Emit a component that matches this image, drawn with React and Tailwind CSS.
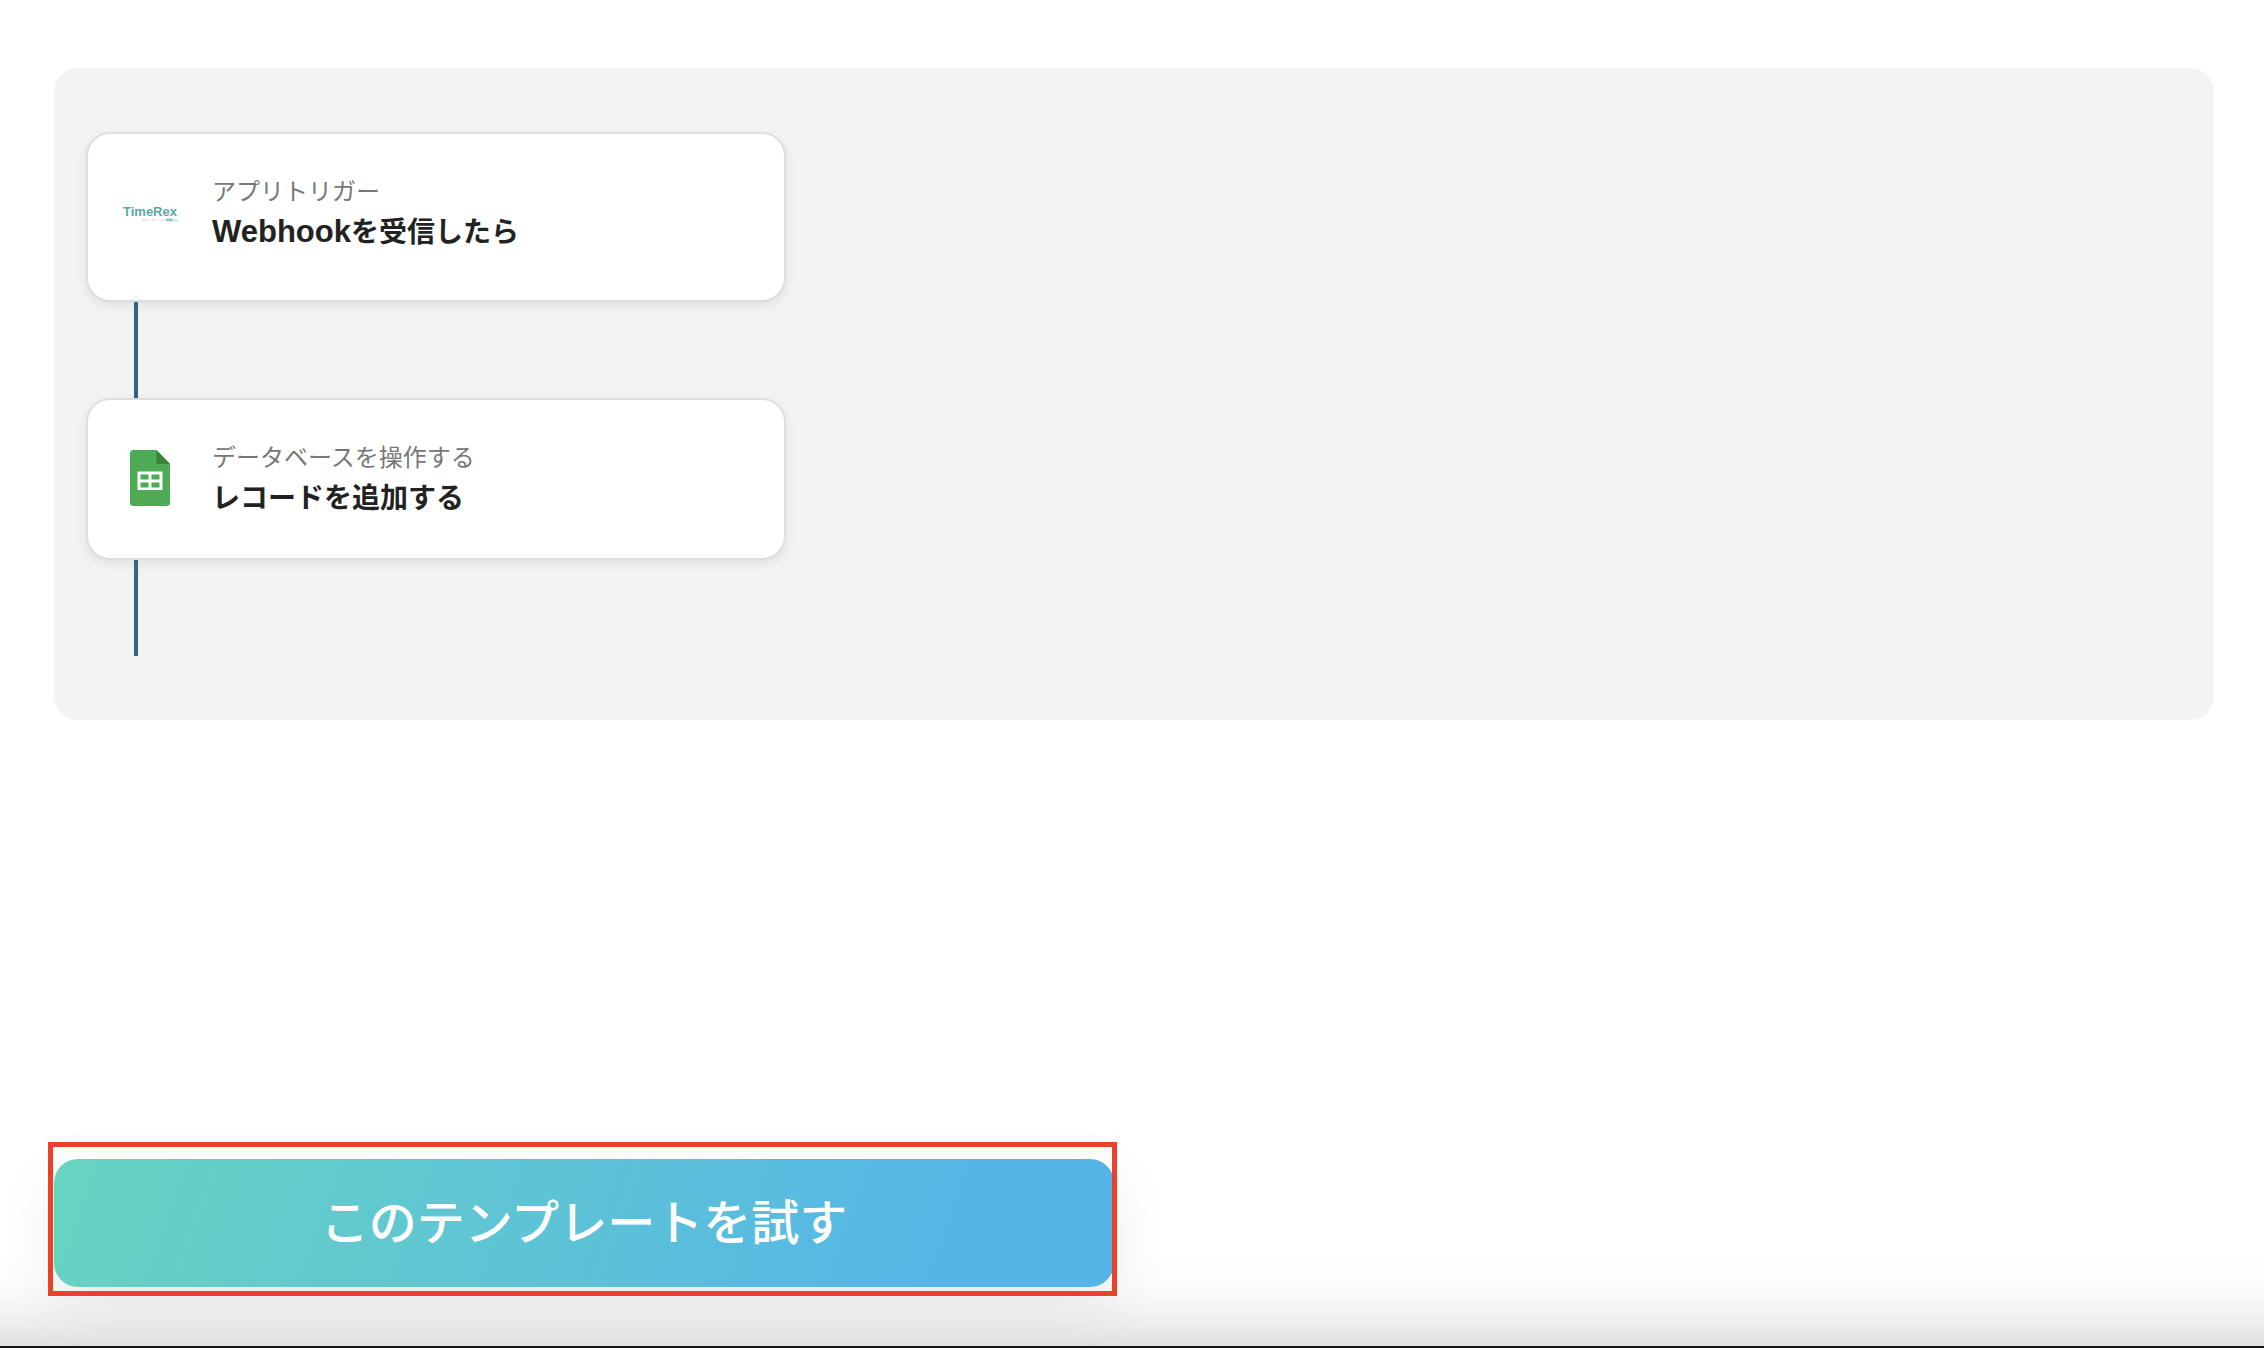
function TimeRexLogo() {
  return (
    <div className="flex h-14 w-14 flex-col items-center justify-center pt-1 font-['Liberation_Sans',sans-serif]">
      <span className="text-[13px] leading-[12px] font-bold text-[#57aaa0]">TimeRex</span>
      <span className="self-end text-[3px] leading-[4px] whitespace-nowrap text-gray-400">
        カレンダーシェア<b className="text-[#57aaa0]">調整なら</b>
      </span>
    </div>
  );
}

function SheetsLogo() {
  return (
    <svg viewBox="0 0 40 56" className="h-14 w-10" aria-hidden="true">
      <path d="M3.5 0H26.5L40 14V52.5Q40 56 36.5 56H3.5Q0 56 0 52.5V3.5Q0 0 3.5 0Z" fill="#4eab55" />
      <path d="M26.5 0L40 14H26.5Z" fill="#3a8339" />
      <path
        d="M7.5 21.5H32.5V40H7.5ZM10.5 24.5V29.5H18.5V24.5ZM21.5 24.5V29.5H29.5V24.5ZM10.5 32.5V37.5H18.5V32.5ZM21.5 32.5V37.5H29.5V32.5Z"
        fill="#fff"
        fillRule="evenodd"
      />
    </svg>
  );
}

function StepCard({ logo, label, title, className }) {
  return (
    <li>
      <article
        className={`flex w-full max-w-[700px] gap-8 rounded-3xl border-2 border-[#dedede] bg-white px-8 pt-[38px] shadow-[0_4px_12px_rgba(0,0,0,0.08)] ${className}`}
      >
        <div className="mt-3 flex h-14 w-[60px] shrink-0 items-center justify-center">{logo}</div>
        <div>
          <p className="text-[24px] leading-[36px] text-[#777]">{label}</p>
          <h2 className="text-[28px] leading-[44px] font-bold text-[#222]">{title}</h2>
        </div>
      </article>
      <div className="ml-12 h-24 w-1 bg-[#30667f]" />
    </li>
  );
}

export default function App() {
  return (
    <div className="flex min-h-screen flex-col bg-white font-['Noto_Sans_CJK_JP',sans-serif]">
      <main className="mt-[68px] mr-[50px] ml-[54px]">
        <ol className="rounded-3xl bg-[#f3f3f3] px-8 py-16">
          <StepCard
            logo={<TimeRexLogo />}
            label="アプリトリガー"
            title={
              <>
                <span className="font-['Liberation_Sans',sans-serif] text-[31px] leading-none">Webhook</span>を受信したら
              </>
            }
            className="pb-12"
          />
          <StepCard
            logo={<SheetsLogo />}
            label="データベースを操作する"
            title="レコードを追加する"
            className="pb-10"
          />
        </ol>
      </main>
      <div className="relative mt-[439px] ml-[54px] w-full max-w-[1060px]">
        <button
          type="button"
          className="block h-32 w-full rounded-3xl bg-linear-[110deg,#68d4c1,#55b5e7_85%] pb-2 text-[48px] font-medium text-white shadow-[0_16px_60px_rgba(0,0,0,0.08)]"
        >
          このテンプレートを試す
        </button>
        <div className="pointer-events-none absolute -top-[17px] -right-[3px] -bottom-[9px] -left-[6px] border-[5px] border-[#eb4128]" />
      </div>
      <footer className="pointer-events-none -mt-[39px] h-[100px] border-b-2 border-[#0d1515] bg-[linear-gradient(to_bottom,transparent,rgb(224_224_224/0.1)_40%,rgb(224_224_224/0.32)_60%,rgb(224_224_224/0.6)_78%,rgb(224_224_224))]" />
    </div>
  );
}
